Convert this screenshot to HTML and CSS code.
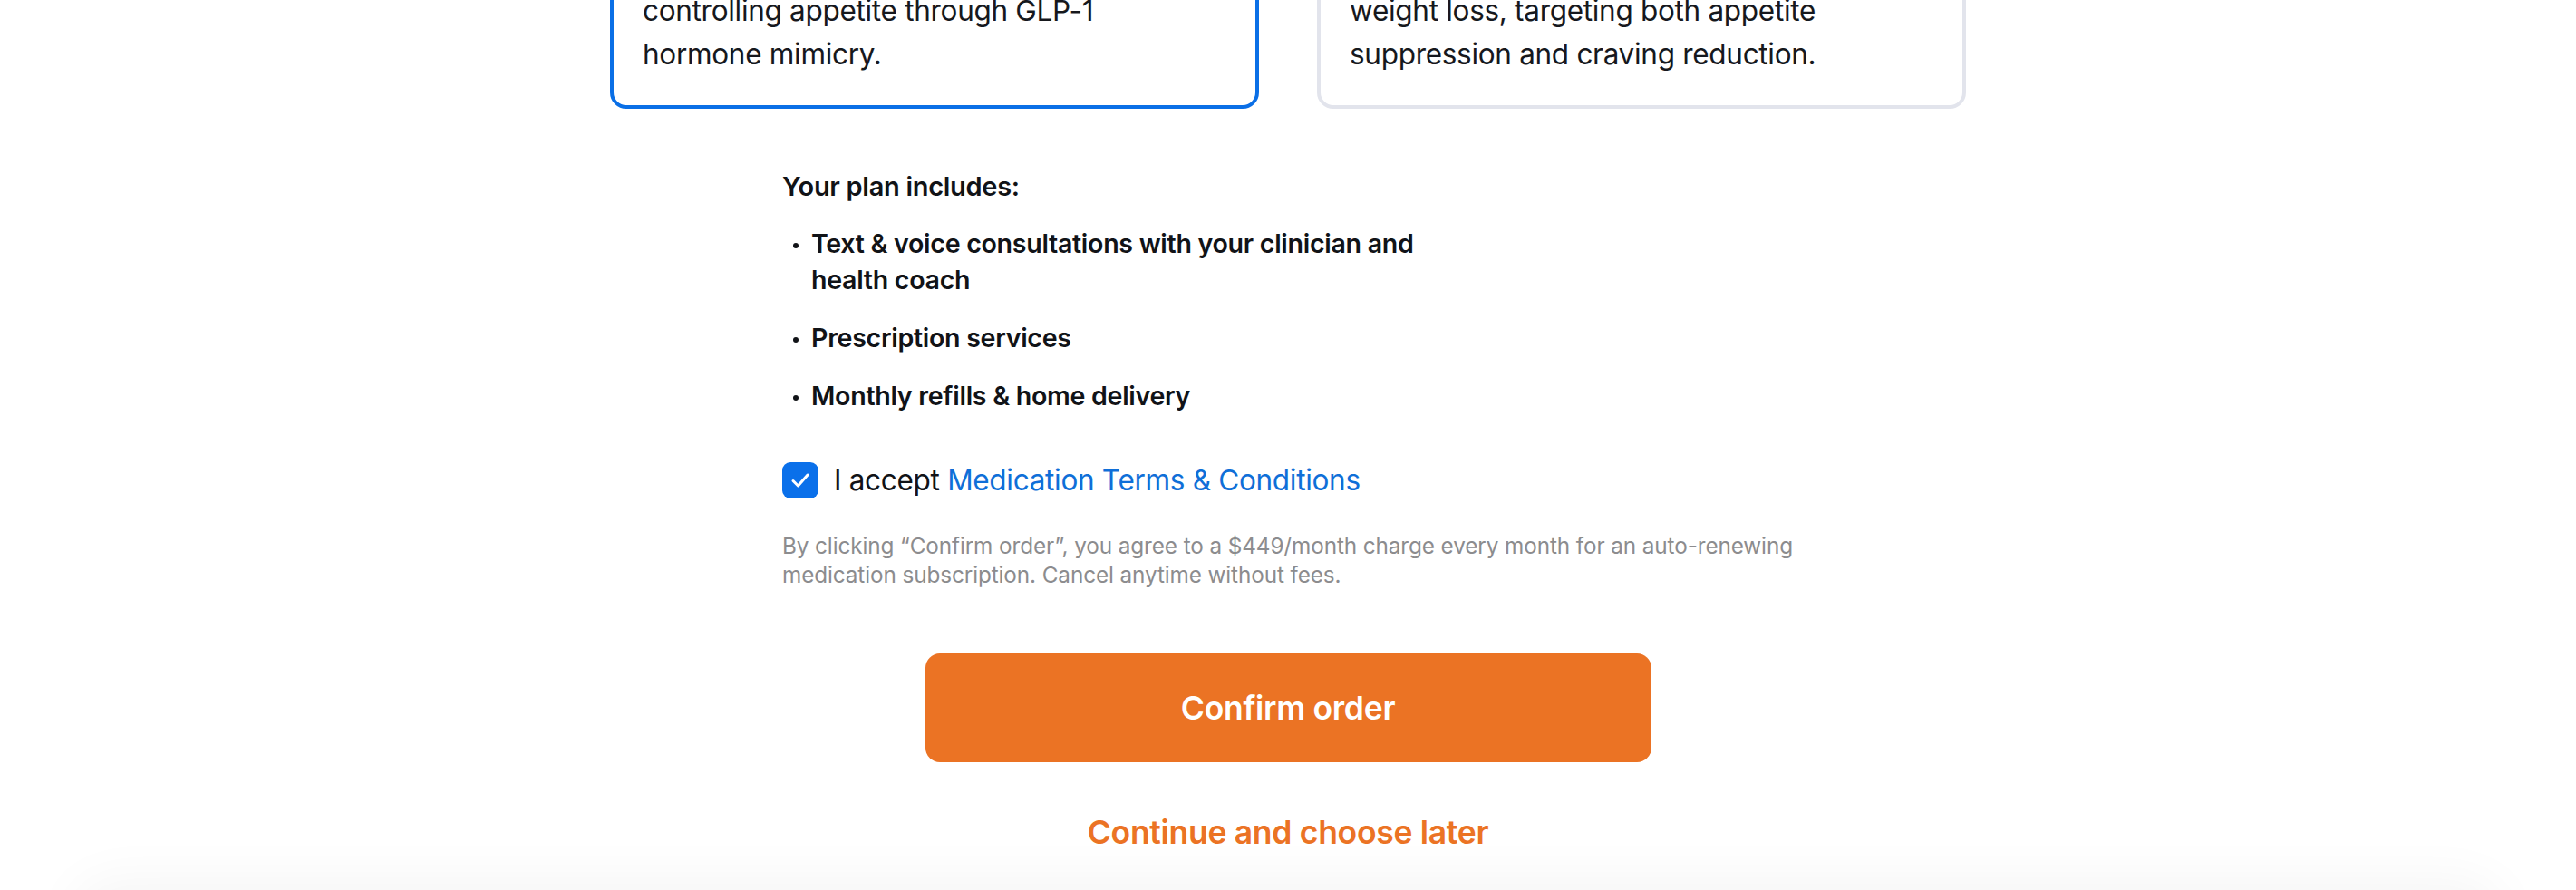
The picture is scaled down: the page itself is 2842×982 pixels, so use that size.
FILE: index.html
```html
<!DOCTYPE html>
<html lang="en">
<head>
<meta charset="utf-8">
<title>Confirm order</title>
<link rel="stylesheet" href="styles.css">
</head>
<body>
<div class="page">
  <div class="cards">
    <div class="card card-selected">
      <p class="card-text">controlling appetite through GLP-1<br>hormone mimicry.</p>
    </div>
    <div class="card">
      <p class="card-text">weight loss, targeting both appetite<br>suppression and craving reduction.</p>
    </div>
  </div>

  <div class="content">
    <h3 class="plan-title">Your plan includes:</h3>
    <ul class="plan-list">
      <li>Text &amp; voice consultations with your clinician and health coach</li>
      <li>Prescription services</li>
      <li>Monthly refills &amp; home delivery</li>
    </ul>

    <label class="accept">
      <span class="checkbox">
        <svg viewBox="0 0 40 40" width="40" height="40" aria-hidden="true">
          <path d="M12 20.5 L17.5 26 L28 14" fill="none" stroke="#fff" stroke-width="3" stroke-linecap="round" stroke-linejoin="round"/>
        </svg>
      </span>
      <span class="accept-text">I accept <a class="link" href="#">Medication Terms &amp; Conditions</a></span>
    </label>

    <p class="disclaimer">By clicking “Confirm order”, you agree to a $449/month charge every month for an <span class="nowrap">auto-renewing</span> medication subscription. Cancel anytime without fees.</p>
  </div>

  <div class="actions">
    <button class="btn-primary" type="button">Confirm order</button>
    <a class="btn-link" href="#">Continue and choose later</a>
  </div>

  <div class="footer-shadow"></div>
</div>
</body>
</html>
```

FILE: styles.css
```css
* { box-sizing: border-box; }

html, body {
  margin: 0;
  padding: 0;
  background: #ffffff;
}

body {
  font-family: "Inter", "Liberation Sans", sans-serif;
  color: #111317;
}

.page {
  position: relative;
  height: 982px;
  overflow: hidden;
  display: flex;
  flex-direction: column;
  align-items: center;
}

.cards {
  display: flex;
  gap: 64px;
  width: 1496px;
  margin-top: -48px;
}

.card {
  flex: 1;
  border: 4px solid #e2e4ec;
  border-radius: 18px;
  padding: 32px;
  background: #fff;
}

.card-selected {
  border-color: #0a6fe6;
}

.card-text {
  margin: 0;
  font-size: 31.5px;
  line-height: 48px;
  letter-spacing: -0.3px;
  color: #16181d;
}

.content {
  width: 1116px;
  margin-top: 66px;
}

.plan-title {
  margin: 0;
  font-size: 29px;
  line-height: 40px;
  font-weight: 600;
  letter-spacing: -0.3px;
  color: #111317;
}

.plan-list {
  list-style: none;
  margin: 23px 0 0 0;
  padding: 0;
  display: flex;
  flex-direction: column;
  gap: 24px;
}

.plan-list li {
  position: relative;
  padding-left: 32px;
  max-width: 720px;
  font-size: 28.6px;
  line-height: 40px;
  font-weight: 600;
  letter-spacing: -0.3px;
  color: #111317;
}

.plan-list li::before {
  content: "";
  position: absolute;
  left: 12px;
  top: 19px;
  width: 6px;
  height: 6px;
  border-radius: 50%;
  background: #111317;
}

.accept {
  display: flex;
  align-items: center;
  gap: 17px;
  margin-top: 53px;
  cursor: pointer;
}

.checkbox {
  width: 40px;
  height: 40px;
  border-radius: 9px;
  background: #0a70ea;
  display: flex;
  flex-shrink: 0;
}

.accept-text {
  font-size: 31.5px;
  line-height: 40px;
  letter-spacing: -0.3px;
  color: #111317;
}

.link {
  color: #0f6fd8;
  text-decoration: none;
}

.disclaimer {
  margin: 36px 0 0 0;
  font-size: 24.3px;
  line-height: 32px;
  color: #8c8c8e;
  letter-spacing: -0.1px;
}

.nowrap {
  white-space: nowrap;
}

.actions {
  display: flex;
  flex-direction: column;
  align-items: center;
  margin-top: 71px;
}

.btn-primary {
  width: 801px;
  height: 120px;
  border: none;
  border-radius: 16px;
  background: #eb7324;
  color: #ffffff;
  font-family: "Inter", "Liberation Sans", sans-serif;
  font-size: 35.5px;
  font-weight: 600;
  letter-spacing: -0.3px;
  cursor: pointer;
}

.btn-link {
  margin-top: 54px;
  font-size: 35.5px;
  line-height: 48px;
  font-weight: 600;
  letter-spacing: -0.3px;
  color: #eb7324;
  text-decoration: none;
}

.footer-shadow {
  position: absolute;
  left: 90px;
  right: 90px;
  bottom: -70px;
  height: 70px;
  border-radius: 60px;
  background: #fff;
  box-shadow: 0 0 60px 10px rgba(0, 0, 0, 0.045);
}
```
